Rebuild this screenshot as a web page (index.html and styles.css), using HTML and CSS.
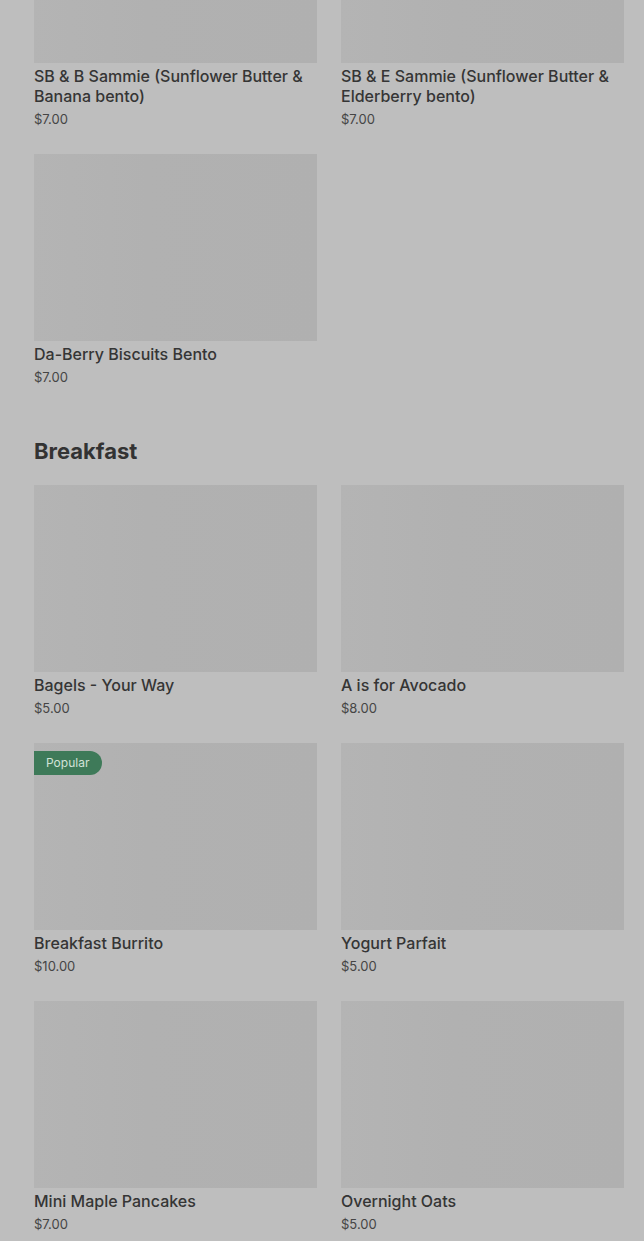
FILE: index.html
```html
<!DOCTYPE html>
<html lang="en">
<head>
<meta charset="utf-8">
<title>Menu</title>
<link rel="stylesheet" href="styles.css">
</head>
<body>
<main class="menu">
  <section class="section">
    <div class="grid">
      <article class="card">
        <div class="thumb"></div>
        <h3 class="name">SB &amp; B Sammie (Sunflower Butter &amp; Banana bento)</h3>
        <p class="price">$7.00</p>
      </article>
      <article class="card">
        <div class="thumb"></div>
        <h3 class="name">SB &amp; E Sammie (Sunflower Butter &amp; Elderberry bento)</h3>
        <p class="price">$7.00</p>
      </article>
      <article class="card">
        <div class="thumb"></div>
        <h3 class="name">Da-Berry Biscuits Bento</h3>
        <p class="price">$7.00</p>
      </article>
    </div>
  </section>
  <section class="section">
    <h2 class="section-title">Breakfast</h2>
    <div class="grid">
      <article class="card">
        <div class="thumb"></div>
        <h3 class="name">Bagels - Your Way</h3>
        <p class="price">$5.00</p>
      </article>
      <article class="card">
        <div class="thumb"></div>
        <h3 class="name">A is for Avocado</h3>
        <p class="price">$8.00</p>
      </article>
      <article class="card">
        <div class="thumb"><span class="badge">Popular</span></div>
        <h3 class="name">Breakfast Burrito</h3>
        <p class="price">$10.00</p>
      </article>
      <article class="card">
        <div class="thumb"></div>
        <h3 class="name">Yogurt Parfait</h3>
        <p class="price">$5.00</p>
      </article>
      <article class="card">
        <div class="thumb"></div>
        <h3 class="name">Mini Maple Pancakes</h3>
        <p class="price">$7.00</p>
      </article>
      <article class="card">
        <div class="thumb"></div>
        <h3 class="name">Overnight Oats</h3>
        <p class="price">$5.00</p>
      </article>
    </div>
  </section>
</main>
</body>
</html>
```
FILE: styles.css
```css
html, body {
  margin: 0;
  padding: 0;
  background: #bebebe;
  overflow: hidden;
}
body {
  font-family: "Inter", "Roboto", "Liberation Sans", sans-serif;
  color: #363636;
}
.menu {
  margin-top: -124px;
  padding: 0 20px 0 34px;
}
.section + .section {
  margin-top: 51px;
}
.section-title {
  margin: 0 0 20px;
  font-size: 22px;
  line-height: 28px;
  font-weight: 700;
  color: #333;
}
.grid {
  display: grid;
  grid-template-columns: 283px 283px;
  column-gap: 24px;
  row-gap: 26px;
}
.card {
  display: flex;
  flex-direction: column;
}
.thumb {
  position: relative;
  height: 187px;
  background: linear-gradient(90deg, #b4b4b4 0%, #b1b1b1 40%, #b0b0b0 100%);
}
.badge {
  position: absolute;
  top: 8px;
  left: 0;
  height: 24px;
  width: 68px;
  box-sizing: border-box;
  padding-left: 12px;
  border-radius: 0 12px 12px 0;
  background: #3e7a59;
  color: #d2e2d8;
  font-size: 12px;
  line-height: 24px;
}
.name {
  margin: 3px 0 0;
  font-size: 16px;
  line-height: 20px;
  font-weight: 500;
  color: #353535;
}
.price {
  margin: 4px 0 0;
  font-size: 13px;
  line-height: 18px;
  color: #454545;
}
```
